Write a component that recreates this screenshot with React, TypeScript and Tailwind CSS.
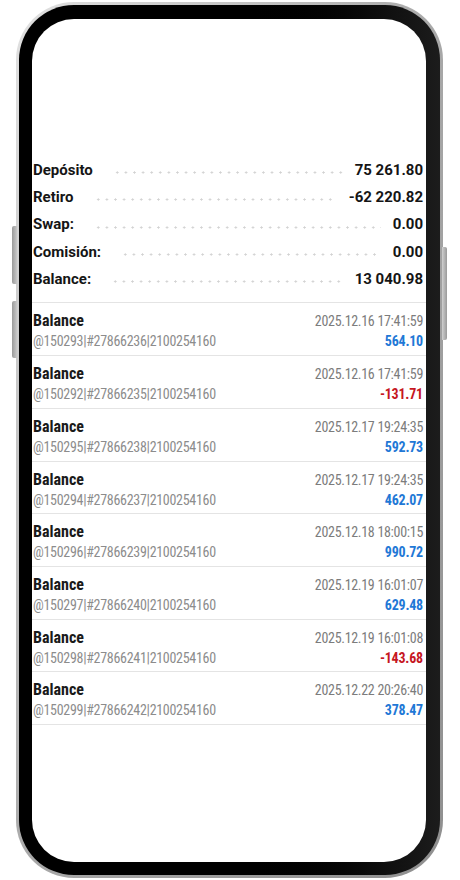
const summary = [
  { label: 'Depósito', value: '75 261.80' },
  { label: 'Retiro', value: '-62 220.82' },
  { label: 'Swap:', value: '0.00' },
  { label: 'Comisión:', value: '0.00' },
  { label: 'Balance:', value: '13 040.98' },
];

const deals = [
  { id: '@150293|#27866236|2100254160', time: '2025.12.16 17:41:59', amount: '564.10' },
  { id: '@150292|#27866235|2100254160', time: '2025.12.16 17:41:59', amount: '-131.71' },
  { id: '@150295|#27866238|2100254160', time: '2025.12.17 19:24:35', amount: '592.73' },
  { id: '@150294|#27866237|2100254160', time: '2025.12.17 19:24:35', amount: '462.07' },
  { id: '@150296|#27866239|2100254160', time: '2025.12.18 18:00:15', amount: '990.72' },
  { id: '@150297|#27866240|2100254160', time: '2025.12.19 16:01:07', amount: '629.48' },
  { id: '@150298|#27866241|2100254160', time: '2025.12.19 16:01:08', amount: '-143.68' },
  { id: '@150299|#27866242|2100254160', time: '2025.12.22 20:26:40', amount: '378.47' },
];

const condensed =
  "font-['Roboto_Condensed','Liberation_Sans_Narrow','DejaVu_Sans_Condensed',Roboto,sans-serif] [font-stretch:condensed]";

export default function App() {
  return (
    <div className="w-[460px] h-[880px] bg-white overflow-hidden font-[Roboto,sans-serif]">
      {/* phone frame */}
      <div className="relative ml-[16px] mt-[2px] w-[427px] h-[876px] rounded-[58px] bg-gradient-to-br from-[#e2e2e2] via-[#a9a9a9] to-[#8f8f8f] p-[3px]">
        <div className="absolute left-[-4px] top-[224px] w-[5px] h-[58px] rounded-l-[2px] bg-gradient-to-r from-[#9a9a9a] to-[#c8c8c8]" />
        <div className="absolute left-[-4px] top-[299px] w-[5px] h-[57px] rounded-l-[2px] bg-gradient-to-r from-[#9a9a9a] to-[#c8c8c8]" />
        <div className="absolute right-[-4px] top-[245px] w-[5px] h-[93px] rounded-r-[2px] bg-gradient-to-l from-[#9a9a9a] to-[#d0d0d0]" />

        <div className="h-full w-full rounded-[55px] bg-gradient-to-r from-black via-black to-[#1c1c1c] pt-[14px] pb-[13px] pl-[13px] pr-[14px]">
          <div className="h-full w-full rounded-[42px] bg-white overflow-hidden pt-[137.5px]">
            {/* summary */}
            <div className="pl-[1px] pr-[3px] pb-[9.5px] border-b border-[#e4e4e4]">
              {summary.map((s) => (
                <div key={s.label} className="flex items-center h-[27.3px] text-[15px] font-bold text-[#151515]">
                  <span>{s.label}</span>
                  <span className="flex-1 ml-[20px] mr-[12px] mt-[5px] h-[3px] bg-[radial-gradient(circle,#d2d2d2_0.9px,transparent_1.3px)] bg-[length:8.6px_3px] bg-repeat-x" />
                  <span>{s.value}</span>
                </div>
              ))}
            </div>

            {/* deals list */}
            <div className={condensed}>
              {deals.map((d) => (
                <div
                  key={d.id}
                  className="flex justify-between h-[52.7px] pt-[8px] pl-[1px] pr-[3px] border-b border-[#e4e4e4]"
                >
                  <div className="flex flex-col">
                    <span className="leading-[20px] text-[16px] font-bold text-[#1a1a1a]">Balance</span>
                    <span className="leading-[20px] text-[14px] tracking-[-0.3px] text-[#8c8c8c]">{d.id}</span>
                  </div>
                  <div className="flex flex-col items-end">
                    <span className="leading-[20px] text-[14px] tracking-[-0.3px] text-[#7c7c7c]">{d.time}</span>
                    <span
                      className={
                        'leading-[20px] text-[14px] font-bold tracking-[-0.2px] ' +
                        (d.amount.startsWith('-') ? 'text-[#c6171f]' : 'text-[#1f78d6]')
                      }
                    >
                      {d.amount}
                    </span>
                  </div>
                </div>
              ))}
            </div>
          </div>
        </div>
      </div>
    </div>
  );
}
